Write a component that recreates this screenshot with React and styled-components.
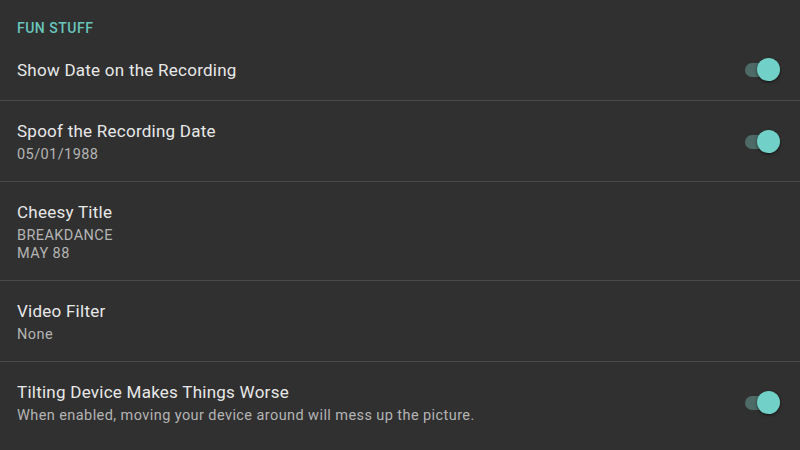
import React from "react";
import styled, { createGlobalStyle } from "styled-components";

const Global = createGlobalStyle`
  html, body { margin: 0; padding: 0; background: #303030; }
  body { font-family: Roboto, "Noto Sans", sans-serif; }
`;

const Screen = styled.div`
  width: 800px;
  height: 450px;
  overflow: hidden;
  background: #303030;
`;

const Header = styled.div`
  padding: 20px 17px 0;
  line-height: 17px;
  font-size: 14px;
  font-weight: 500;
  color: #68c6bc;
  letter-spacing: 0.5px;
`;

const Row = styled.div`
  display: flex;
  align-items: center;
  padding: ${(p) => (p.$single ? "21px 20px 18px 17px" : "19px 20px 17px 17px")};
  border-bottom: ${(p) => (p.$last ? "none" : "1px solid #4a4a4a")};
`;

const Texts = styled.div`
  flex: 1;
  display: flex;
  flex-direction: column;
`;

const Title = styled.div`
  font-size: 17px;
  line-height: 22px;
  letter-spacing: 0.25px;
  color: #e8e8e8;
`;

const Sub = styled.div`
  margin-top: 4px;
  font-size: 14.5px;
  line-height: 18px;
  letter-spacing: 0.42px;
  color: #b4b4b4;
`;

const Switch = styled.div`
  position: relative;
  width: 35px;
  height: 24px;
  flex: none;
`;

const Track = styled.div`
  position: absolute;
  left: 0;
  top: 5px;
  width: 34px;
  height: 14px;
  border-radius: 7px;
  background: #4d6a67;
`;

const Thumb = styled.div`
  position: absolute;
  right: 0;
  top: 0;
  width: 23px;
  height: 23px;
  border-radius: 50%;
  background: #71d1c8;
  box-shadow: 0 1px 3px rgba(0, 0, 0, 0.6);
`;

const Toggle = () => (
  <Switch>
    <Track />
    <Thumb />
  </Switch>
);

const items = [
  { title: "Show Date on the Recording", subs: [], toggle: true },
  { title: "Spoof the Recording Date", subs: ["05/01/1988"], toggle: true },
  { title: "Cheesy Title", subs: ["BREAKDANCE", "MAY 88"], toggle: false },
  { title: "Video Filter", subs: ["None"], toggle: false },
  {
    title: "Tilting Device Makes Things Worse",
    subs: ["When enabled, moving your device around will mess up the picture."],
    toggle: true,
  },
];

export default function App() {
  return (
    <Screen>
      <Global />
      <Header>FUN STUFF</Header>
      {items.map((it, i) => (
        <Row
          key={it.title}
          $single={it.subs.length === 0}
          $last={i === items.length - 1}
        >
          <Texts>
            <Title>{it.title}</Title>
            {it.subs.length > 0 && (
              <Sub>
                {it.subs.map((s) => (
                  <div key={s}>{s}</div>
                ))}
              </Sub>
            )}
          </Texts>
          {it.toggle && <Toggle />}
        </Row>
      ))}
    </Screen>
  );
}
